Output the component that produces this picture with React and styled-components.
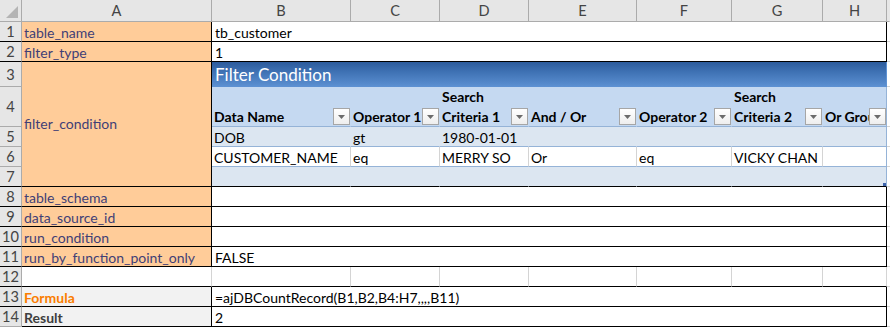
import React from "react";
import styled, { createGlobalStyle } from "styled-components";

const GlobalStyle = createGlobalStyle`
  html, body {
    margin: 0;
    padding: 0;
    background: #fff;
  }
  body {
    font-family: Lato, "Open Sans", "Liberation Sans", sans-serif;
    font-size: 14px;
  }
`;

const GRID = "#d4d4d4";
const BLACK = "#000";
const BAND = "#dce6f1";
const HEAD = "#c5d9f1";
const TBLINE = "#95b3d7";

const columns = ["A", "B", "C", "D", "E", "F", "G", "H"];

const Sheet = styled.div`
  display: grid;
  grid-template-columns: 22px 190px 139px 89px 89px 108px 95px 91px 64px 1fr;
  grid-template-rows: 22px 20px 20px 25px 40px repeat(10, 20px);
  width: 890px;
`;

const Corner = styled.div`
  box-sizing: border-box;
  display: flex;
  align-items: flex-end;
  justify-content: flex-end;
  padding: 0 3px 3px 0;
  background: #e6e6e6;
  border-right: 1px solid #ababab;
  border-bottom: 1px solid #ababab;
`;

const CornerMark = styled.span`
  width: 12px;
  height: 12px;
  background: #b4b4b4;
  clip-path: polygon(100% 0, 100% 100%, 0 100%);
`;

const ColHead = styled.div`
  box-sizing: border-box;
  display: flex;
  align-items: center;
  justify-content: center;
  font-size: 14.6px;
  background: #e6e6e6;
  color: #444;
  border-right: 1px solid ${(p) => (p.$last ? "#e6e6e6" : "#ababab")};
  border-bottom: 1px solid #ababab;
`;

const RowHead = styled.div`
  box-sizing: border-box;
  display: flex;
  align-items: center;
  justify-content: center;
  font-size: 14.6px;
  background: #e6e6e6;
  color: #444;
  border-right: 1px solid #ababab;
  border-bottom: 1px solid ${(p) => p.$edge || "#ababab"};
`;

const Cell = styled.div`
  box-sizing: border-box;
  position: relative;
  display: flex;
  align-items: ${(p) => p.$valign || "flex-end"};
  padding: 0 2px 0 2px;
  line-height: 16px;
  grid-column: span ${(p) => p.$span || 1};
  grid-row: span ${(p) => p.$rows || 1};
  background: ${(p) => p.$bg || "#fff"};
  color: ${(p) => p.$color || "#000"};
  font-weight: ${(p) => (p.$bold ? 700 : 400)};
  border-right: 1px solid ${(p) => p.$r || GRID};
  border-bottom: 1px solid ${(p) => p.$b || GRID};
  white-space: nowrap;
  overflow: hidden;
`;

const Filler = styled.div`
  box-sizing: border-box;
  background: #fff;
  border-bottom: 1px solid ${GRID};
`;

const TitleCell = styled.div`
  box-sizing: border-box;
  grid-column: span 7;
  display: flex;
  align-items: center;
  padding: 0 3px 1px;
  color: #fff;
  font-size: 17px;
  background: linear-gradient(to bottom, #2c5b9c 0%, #3f72b4 40%, #5589cb 85%, #5e92d3 100%);
  border-right: 1px solid #5e92d3;
`;

const HeadCell = styled.div`
  box-sizing: border-box;
  position: relative;
  display: flex;
  align-items: flex-end;
  padding: 0 2px;
  line-height: 20px;
  font-weight: 700;
  color: #000;
  background: ${HEAD};
  border-right: 1px solid ${(p) => (p.$last ? TBLINE : HEAD)};
  border-bottom: 1px solid ${TBLINE};
  white-space: pre;
  overflow: hidden;
`;

const HeadText = styled.span`
  margin-bottom: -1px;
`;

const FilterBtn = styled.span`
  position: absolute;
  right: 0;
  bottom: 1px;
  box-sizing: border-box;
  width: 17px;
  height: 17px;
  display: flex;
  align-items: center;
  justify-content: center;
  border: 1px solid #a6a6a6;
  background: linear-gradient(to bottom, #ffffff, #eeeeee);
`;

const Handle = styled.span`
  position: absolute;
  right: 0;
  bottom: 0;
  width: 3px;
  height: 3px;
  background: #3c62ab;
`;

const Label = styled(Cell).attrs({ $bg: "#ffcc99", $color: "#3f3f76", $r: BLACK, $b: BLACK })``;
const Value = styled(Cell).attrs({ $span: 7, $r: BLACK, $b: BLACK })`
  padding-left: 3px;
`;

function Arrow() {
  return (
    <svg width="7" height="4" viewBox="0 0 7 4">
      <polygon points="0,0 7,0 3.5,4" fill="#6b6b6b" />
    </svg>
  );
}

const headers = [
  "Data Name",
  "Operator 1",
  "Search\nCriteria 1",
  "And / Or",
  "Operator 2",
  "Search\nCriteria 2",
  "Or Group",
];

const rows = [
  ["DOB", "gt", "1980-01-01", "", "", "", ""],
  ["CUSTOMER_NAME", "eq", "MERRY SO", "Or", "eq", "VICKY CHAN", ""],
];

export default function App() {
  return (
    <>
      <GlobalStyle />
      <Sheet>
        <Corner>
          <CornerMark />
        </Corner>
        {columns.map((c) => (
          <ColHead key={c}>{c}</ColHead>
        ))}
        <ColHead $last />

        <RowHead $edge={BLACK}>1</RowHead>
        <Label>table_name</Label>
        <Value>tb_customer</Value>
        <Filler />

        <RowHead $edge={BLACK}>2</RowHead>
        <Label>filter_type</Label>
        <Value>1</Value>
        <Filler />

        <RowHead>3</RowHead>
        <Label $rows={5} $valign="center">
          filter_condition
        </Label>
        <TitleCell>Filter Condition</TitleCell>
        <Filler />

        <RowHead>4</RowHead>
        {headers.map((h, i) => (
          <HeadCell key={h} $last={i === headers.length - 1}>
            <HeadText>{h}</HeadText>
            <FilterBtn>
              <Arrow />
            </FilterBtn>
          </HeadCell>
        ))}
        <Filler />

        {rows.map((r, ri) => (
          <React.Fragment key={ri}>
            <RowHead>{5 + ri}</RowHead>
            {r.map((v, i) => {
              const band = ri % 2 === 0;
              const last = i === r.length - 1;
              return (
                <Cell
                  key={i}
                  $bg={band ? BAND : "#fff"}
                  $r={last ? TBLINE : band ? BAND : GRID}
                  $b={TBLINE}
                >
                  {v}
                </Cell>
              );
            })}
            <Filler />
          </React.Fragment>
        ))}

        <RowHead $edge={BLACK}>7</RowHead>
        {headers.map((h, i) => {
          const last = i === headers.length - 1;
          return (
            <Cell key={h} $bg={BAND} $r={last ? TBLINE : BAND} $b={BLACK}>
              {last && <Handle />}
            </Cell>
          );
        })}
        <Filler />

        <RowHead $edge={BLACK}>8</RowHead>
        <Label>table_schema</Label>
        <Value />
        <Filler />

        <RowHead $edge={BLACK}>9</RowHead>
        <Label>data_source_id</Label>
        <Value />
        <Filler />

        <RowHead $edge={BLACK}>10</RowHead>
        <Label>run_condition</Label>
        <Value />
        <Filler />

        <RowHead $edge={BLACK}>11</RowHead>
        <Label>run_by_function_point_only</Label>
        <Value>FALSE</Value>
        <Filler />

        <RowHead $edge={BLACK}>12</RowHead>
        <Cell $b={BLACK} />
        {headers.map((h) => (
          <Cell key={h} $b={BLACK} />
        ))}
        <Filler />

        <RowHead $edge={BLACK}>13</RowHead>
        <Cell $bg="#f2f2f2" $color="#fa7d00" $bold $r={BLACK} $b={BLACK}>
          Formula
        </Cell>
        <Value>=ajDBCountRecord(B1,B2,B4:H7,,,,B11)</Value>
        <Filler />

        <RowHead>14</RowHead>
        <Cell $bg="#f2f2f2" $color="#3f3f3f" $bold $r={BLACK} $b={BLACK}>
          Result
        </Cell>
        <Value>2</Value>
        <Filler />
      </Sheet>
    </>
  );
}
